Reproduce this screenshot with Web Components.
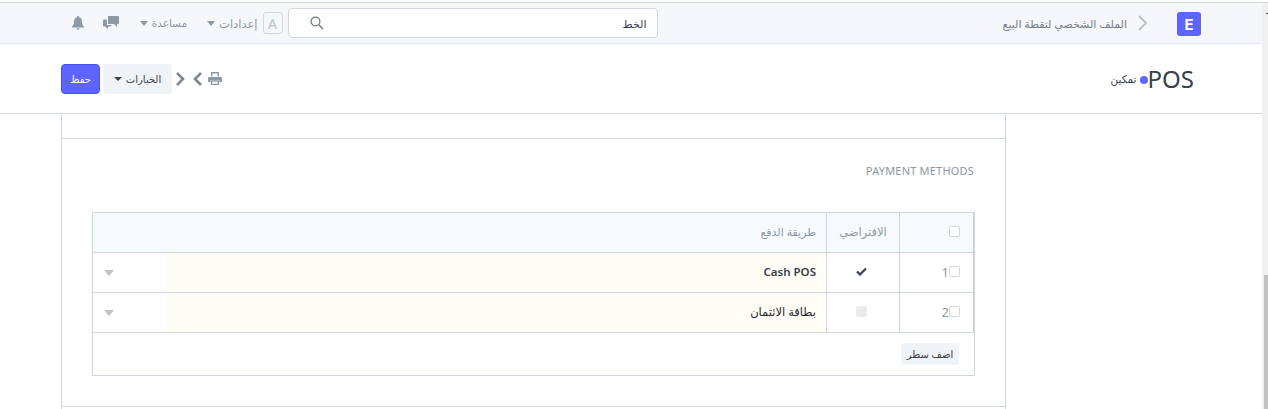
<!DOCTYPE html>
<html lang="ar" dir="rtl">
<head>
<meta charset="utf-8">
<title>POS</title>
<style>
    html, body { margin: 0; height: 100%; overflow: hidden; background: #fff; }
    body { font-family: "Noto Sans", "DejaVu Sans", sans-serif; font-size: 12px; color: #36414c; }
</style>
</head>
<body>
<pos-app>
    <top-nav></top-nav>
    <page-head title-text="POS" status="تمكين"></page-head>
    <form-card>
        <section-heading>PAYMENT METHODS</section-heading>
        <payment-grid>
            <grid-row header>
                <span slot="col-name">طريقة الدفع</span>
                <span slot="col-default">الافتراضي</span>
            </grid-row>
            <grid-row idx="1" checked>
                <span slot="col-name">Cash POS</span>
            </grid-row>
            <grid-row idx="2">
                <span slot="col-name" style="font-weight:400;color:#1f272e">بطاقة الائتمان</span>
            </grid-row>
        </payment-grid>
    </form-card>
</pos-app>

<script>
const define = (name, css, html, init) => {
    customElements.define(name, class extends HTMLElement {
        constructor(){
            super();
            this.attachShadow({mode: "open"});
            this.shadowRoot.innerHTML = "<style>" + css + "</style>" + html;
            if (init) init(this);
        }
    });
};

/* Page shell: content plus the thin scrollbar on the right */
define("pos-app", `
    :host{ display: block; height: 409px; padding-top: 2px; box-sizing: border-box; }
    .top{ height: 1px; background: #d1d8dd; }
    .wrap{ display: flex; height: 406px; }
    .scroll{ width: 6px; background: #f0f0f0; flex: none; }
    .tick{ width: 2px; height: 1px; margin-top: 10px; background: #444; }
    .thumb{ width: 4px; height: 134px; margin-top: 261px; background: #c1c1c1; }
    .main{ flex: 1; min-width: 0; }
`, `
    <div class="top"></div>
    <div class="wrap">
        <div class="scroll"><div class="tick"></div><div class="thumb"></div></div>
        <div class="main"><slot></slot></div>
    </div>
`);

define("top-nav", `
    :host{ display: block; height: 40px; background: #f5f7fa; border-bottom: 1px solid #e8ebef; }
    .bar{ display: flex; align-items: center; height: 40px; color: #6c7680; }
    .logo{ width: 24px; height: 24px; margin: 2px 61px 0 0; border-radius: 3px; background: #5e64ff; color: #fff;
        display: flex; align-items: center; justify-content: center; font: bold 15px "Inter", sans-serif; }
    .chev{ margin: 0 30px 0 11px; display: flex; }
    .crumb{ font-size: 11px; color: #74808b; white-space: nowrap; }
    .search{ box-sizing: border-box; width: 370px; height: 30px; margin-right: 345px; background: #fff;
        border: 1px solid #d1d8dd; border-radius: 4px; display: flex; align-items: center; justify-content: space-between;
        padding: 0 10px 0 21px; }
    .search span{ font-size: 11px; color: #36414c; white-space: nowrap; }
    .search svg{ flex: none; }
    .avatar{ box-sizing: border-box; width: 20px; height: 22px; margin-right: 5px; border: 1px solid #d1d8dd; border-radius: 3px;
        color: #b8c2cc; font: 14px "Noto Sans", sans-serif; display: flex; align-items: center; justify-content: center; }
    .menu{ display: flex; align-items: center; gap: 4px; color: #8d99a6; font-size: 11.5px; white-space: nowrap; }
    .caret{ width: 0; height: 0; border: 4.5px solid transparent; border-top: 5px solid #8d99a6; border-bottom: 0; }
    .m1{ margin-right: 5px; }
    .m2{ margin-right: 20px; font-size: 10.5px; }
    .chat{ margin-right: 21px; display: flex; }
    .bell{ margin-right: 19px; display: flex; }
`, `
    <div class="bar">
        <div class="logo">E</div>
        <svg class="chev" width="9" height="16" viewBox="0 0 9 16"><path d="M1 1l7 7-7 7" fill="none" stroke="#bcc4cc" stroke-width="2"/></svg>
        <span class="crumb">الملف الشخصي لنقطة البيع</span>
        <div class="search">
            <span>الخط</span>
            <svg width="14" height="14" viewBox="0 0 14 14"><circle cx="5.5" cy="5.5" r="4.4" fill="none" stroke="#6c7680" stroke-width="1.2"/><path d="M9 9l4 4" stroke="#6c7680" stroke-width="1.4"/></svg>
        </div>
        <div class="avatar">A</div>
        <div class="menu m1"><span>إعدادات</span><i class="caret"></i></div>
        <div class="menu m2"><span>مساعدة</span><i class="caret"></i></div>
        <svg class="chat" width="16" height="14" viewBox="0 0 16 14"><path d="M5 0h10a1 1 0 0 1 1 1v6a1 1 0 0 1-1 1h-1v3l-3-3H5z" fill="#8d99a6"/><path d="M0 4.500a1 1 0 0 1 1-1h3v5.500h5l-1.500 1.500H5v3l-2.500-3H1a1 1 0 0 1-1-1z" fill="#8d99a6"/></svg>
        <svg class="bell" width="12" height="14" viewBox="0 0 12 14"><path d="M6 0a1 1 0 0 1 1 1.200C9 1.700 10 3.300 10 5.500c0 3 .8 4 2 5v1H0v-1c1.200-1 2-2 2-5C2 3.300 3 1.700 5 1.200A1 1 0 0 1 6 0zM4.500 12.300h3A1.500 1.500 0 0 1 4.500 12.300z" fill="#8d99a6"/></svg>
    </div>
`);

define("page-head", `
    :host{ display: block; height: 69px; border-bottom: 1px solid #d1d8dd; }
    .row{ display: flex; align-items: center; height: 69px; }
    h1{ margin: 0 68px 0 0; font: 24px "Noto Sans", sans-serif; color: #36414c; direction: ltr; }
    .dot{ width: 8px; height: 8px; margin: 2px 0 0 3px; border-radius: 50%; background: #5e64ff; }
    .status{ font-size: 10.5px; color: #36414c; white-space: nowrap; }
    .actions{ display: flex; align-items: center; margin-right: auto; margin-left: 61px; }
    .print{ margin-left: 6px; }
    .nav{ margin-left: 8px; }
    .nav.last{ margin-left: 4px; }
    .opts{ box-sizing: border-box; width: 69px; height: 30px; background: #f0f4f7; border-radius: 4px; display: flex;
        align-items: center; justify-content: center; gap: 4px; font-size: 10px; color: #36414c; }
    .caret{ width: 0; height: 0; border: 4px solid transparent; border-top: 4px solid #36414c; border-bottom: 0; }
    .save{ box-sizing: border-box; width: 39px; height: 30px; margin-right: 3px; background: #5e64ff; border: 1px solid #4a50f0; border-radius: 4px;
        color: #fff; font-size: 10px; display: flex; align-items: center; justify-content: center; }
`, `
    <div class="row">
        <h1 id="title"></h1>
        <div class="dot"></div>
        <span class="status" id="status"></span>
        <div class="actions">
            <svg class="print" width="14" height="13" viewBox="0 0 14 13"><path d="M3 0h8v4.500H9.600V1.500H4.400v3H3z" fill="#8d99a6"/><path d="M1 5h12a1 1 0 0 1 1 1v4h-2.500V8h-9v2H0V6a1 1 0 0 1 1-1z" fill="#8d99a6"/><path d="M3.500 9h7v3.300h-7z" fill="none" stroke="#8d99a6" stroke-width="1.300"/></svg>
            <svg class="nav" width="9" height="14" viewBox="0 0 9 14"><path d="M8 1L2 7l6 6" fill="none" stroke="#7b8894" stroke-width="2.600"/></svg>
            <svg class="nav last" width="9" height="14" viewBox="0 0 9 14"><path d="M1 1l6 6-6 6" fill="none" stroke="#7b8894" stroke-width="2.600"/></svg>
            <div class="opts"><span>الخيارات</span><i class="caret"></i></div>
            <div class="save">حفظ</div>
        </div>
    </div>
`, host => {
    host.shadowRoot.getElementById("title").textContent = host.getAttribute("title-text");
    host.shadowRoot.getElementById("status").textContent = host.getAttribute("status");
});

define("form-card", `
    :host{ display: block; box-sizing: border-box; width: 945px; margin-right: 256px; height: 296px;
        border: 1px solid #d1d8dd; border-top: 0; }
    .strip{ height: 24px; border-bottom: 1px solid #d1d8dd; }
    .body{ padding: 24px 30px 0; height: 243px; border-bottom: 1px solid #d1d8dd; }
`, `
    <div class="strip"></div>
    <div class="body"><slot></slot></div>
`);

define("section-heading", `
    :host{ display: block; height: 49px; margin-right: 1px; font-size: 11px; line-height: 16px; color: #8d99a6; letter-spacing: .2px; }
`, `<slot></slot>`);

define("payment-grid", `
    :host{ display: block; box-sizing: border-box; width: 883px; border: 1px solid #d1d8dd; }
    .foot{ height: 42px; display: flex; align-items: center; padding-right: 15px; }
    .add{ width: 58px; height: 22px; background: #f0f4f7; border-radius: 3px; font-size: 10px; color: #36414c;
        display: flex; align-items: center; justify-content: center; white-space: nowrap; }
    .rows{ border-right: 1px solid #c8ced3; }
`, `
    <div class="rows"><slot></slot></div>
    <div class="foot"><div class="add">اضف سطر</div></div>
`);

define("grid-row", `
    :host{ display: grid; grid-template-columns: 74px 73px 660px 1fr; height: 40px; box-sizing: border-box;
        border-bottom: 1px solid #d1d8dd; }
    :host([header]){ background: #f7fafc; color: #8d99a6; font-size: 11px; }
    :host(:not([header])){ font-size: 11.5px; font-weight: 600; }
    .cell{ display: flex; align-items: center; box-sizing: border-box; min-width: 0; padding-bottom: 2px; }
    .no, .def{ border-left: 1px solid #d1d8dd; }
    .no{ padding-right: 13px; font-size: 13px; font-weight: 400; color: #8d99a6; }
    .box{ box-sizing: border-box; width: 11px; height: 11px; background: #fff; border: 1px solid #d1d8dd; border-radius: 2px; flex: none; }
    .def{ justify-content: center; }
    :host([header]) .def{ font-size: 11.5px; }
    .def svg, .off{ margin-right: 4px; }
    .off{ width: 11px; height: 11px; background: #ebebeb; border-radius: 2px; }
    .name{ padding-right: 10px; }
    :host(:not([header])) .name{ background: #fffdf5; }
    .more{ display: flex; align-items: center; padding-right: 52px; }
    .tri{ width: 0; height: 0; border: 5.5px solid transparent; border-top: 6px solid #c4c4c4; border-bottom: 0; }
`, `
    <div class="cell no"><i class="box"></i><span id="idx"></span></div>
    <div class="cell def" id="def"><slot name="col-default"></slot></div>
    <div class="cell name"><slot name="col-name"></slot></div>
    <div class="more" id="more"></div>
`, host => {
    const root = host.shadowRoot;
    root.getElementById("idx").textContent = host.getAttribute("idx") || "";
    if (!host.hasAttribute("header")){
        root.getElementById("more").innerHTML = '<i class="tri"></i>';
        root.getElementById("def").innerHTML = host.hasAttribute("checked")
            ? '<svg width="11" height="9" viewBox="0 0 11 9"><path d="M1 4.500l3 3 6-6" fill="none" stroke="#36414c" stroke-width="2.200"/></svg>'
            : '<i class="off"></i>';
    }
});
</script>
</body>
</html>
